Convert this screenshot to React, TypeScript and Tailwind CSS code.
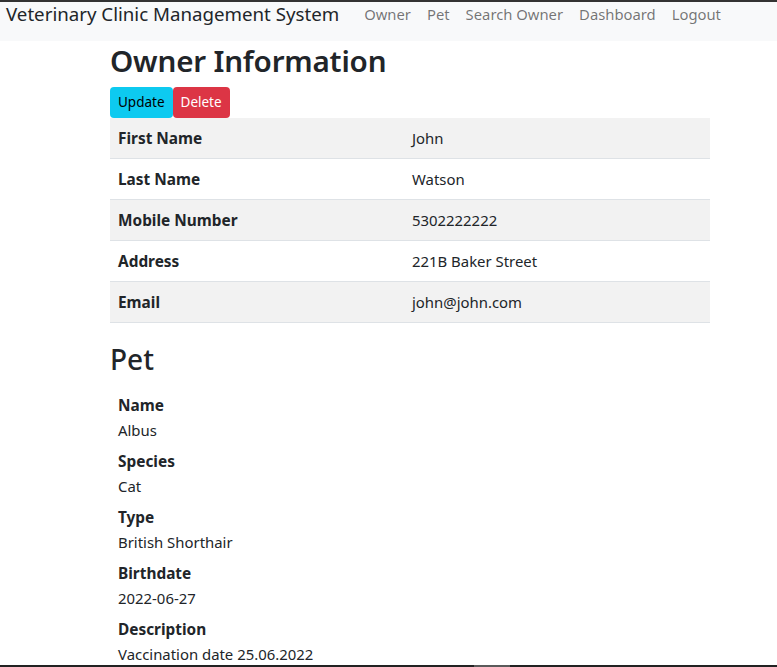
import React from 'react'

const owner = [
  { label: 'First Name', value: 'John' },
  { label: 'Last Name', value: 'Watson' },
  { label: 'Mobile Number', value: '5302222222' },
  { label: 'Address', value: '221B Baker Street' },
  { label: 'Email', value: 'john@john.com' },
]

const pet = [
  { label: 'Name', value: 'Albus' },
  { label: 'Species', value: 'Cat' },
  { label: 'Type', value: 'British Shorthair' },
  { label: 'Birthdate', value: '2022-06-27' },
  { label: 'Description', value: 'Vaccination date 25.06.2022' },
]

const links = ['Owner', 'Pet', 'Search Owner', 'Dashboard', 'Logout']

const App = () => {
  return (
    <div className="h-[667px] flex flex-col overflow-hidden bg-white text-[#212529] font-['Noto_Sans',sans-serif] border-t-2 border-[#333]">
      <nav className="h-[39px] bg-[#f8f9fa] flex items-start shrink-0">
        <a className="ml-[6px] text-[18.7px] leading-[24px] mr-[25px]">Veterinary Clinic Management System</a>
        <ul className="flex gap-[16px] text-[14.8px] leading-[24px] text-black/55">
          {links.map((l) => (
            <li key={l}>{l}</li>
          ))}
        </ul>
      </nav>

      <main className="flex-1 overflow-hidden">
        <div className="ml-[110px] w-[600px]">
          <h1 className="text-[29.6px] font-semibold leading-[40px] mb-[6px] tracking-[-0.2px]">Owner Information</h1>
          <div className="flex">
            <button className="bg-[#0dcaf0] text-black text-[13.5px] leading-[21px] px-2 py-[5px] rounded-[4px]">Update</button>
            <button className="bg-[#dc3545] text-white text-[13.5px] leading-[21px] px-2 py-[5px] rounded-[4px]">Delete</button>
          </div>
          <div className="mb-[19px]">
            {owner.map((row, i) => (
              <div
                key={row.label}
                className={`grid grid-cols-[294px_1fr] border-b border-[#dee2e6] ${i % 2 === 0 ? 'bg-[#f2f2f2]' : 'bg-white'}`}
              >
                <div className="px-2 pt-[9px] pb-[7px] font-bold text-[15.4px] leading-6">{row.label}</div>
                <div className="p-2 text-[14.9px] leading-6">{row.value}</div>
              </div>
            ))}
          </div>
          <h2 className="text-[28px] font-medium leading-[34px] mb-[18px]">Pet</h2>
          <dl className="px-2">
            {pet.map((p) => (
              <div key={p.label} className="mb-2">
                <dt className="font-bold text-[15.4px] leading-6">{p.label}</dt>
                <dd className="text-[14.9px] leading-6">{p.value}</dd>
              </div>
            ))}
          </dl>
        </div>
      </main>

      <div className="h-[2px] shrink-0 bg-[#222] flex">
        <div className="ml-[474px] w-[36px] bg-[#5a5a5a]" />
      </div>
    </div>
  )
}

export default App
